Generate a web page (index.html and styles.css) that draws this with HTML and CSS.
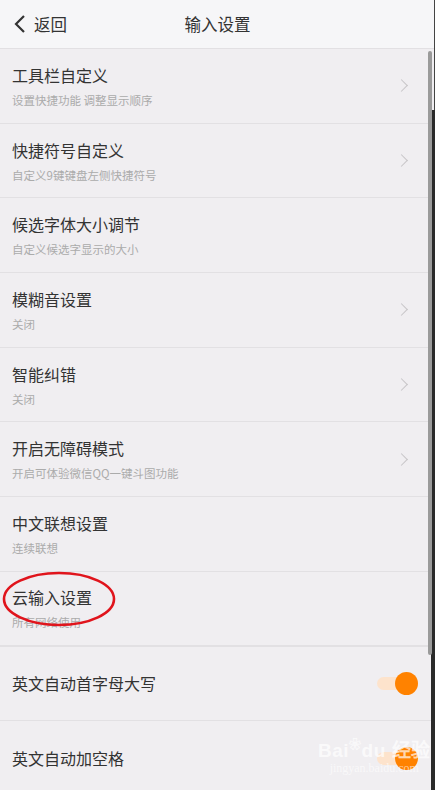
FILE: index.html
```html
<!DOCTYPE html>
<html lang="zh-CN">
<head>
  <meta charset="UTF-8" />
  <meta name="viewport" content="width=device-width, initial-scale=1.0"/>
  <title>输入设置</title>
  <link rel="stylesheet" href="styles.css">
</head>
<body>

  <div class="screen">
    <!-- 顶部栏 -->
    <div class="topbar">
      <div class="back">
        <svg width="14" height="20" viewBox="0 0 14 20"><path d="M11 2 L3 10 L11 18" fill="none" stroke="#333" stroke-width="2.2"/></svg>
        <span>返回</span>
      </div>
      <div class="title">输入设置</div>
    </div>

    <div class="list">
      <div class="item">
        <div class="text"><div class="name">工具栏自定义</div><div class="desc">设置快捷功能 调整显示顺序</div></div>
        <span class="arrow"></span>
      </div>
      <div class="item">
        <div class="text"><div class="name">快捷符号自定义</div><div class="desc">自定义9键键盘左侧快捷符号</div></div>
        <span class="arrow"></span>
      </div>
      <div class="item">
        <div class="text"><div class="name">候选字体大小调节</div><div class="desc">自定义候选字显示的大小</div></div>
      </div>
      <div class="item">
        <div class="text"><div class="name">模糊音设置</div><div class="desc">关闭</div></div>
        <span class="arrow"></span>
      </div>
      <div class="item">
        <div class="text"><div class="name">智能纠错</div><div class="desc">关闭</div></div>
        <span class="arrow"></span>
      </div>
      <div class="item">
        <div class="text"><div class="name">开启无障碍模式</div><div class="desc">开启可体验微信QQ一键斗图功能</div></div>
        <span class="arrow"></span>
      </div>
      <div class="item">
        <div class="text"><div class="name">中文联想设置</div><div class="desc">连续联想</div></div>
      </div>
      <div class="item group-end">
        <div class="text"><div class="name">云输入设置</div><div class="desc">所有网络使用</div></div>
      </div>
      <div class="item">
        <div class="text"><div class="name">英文自动首字母大写</div></div>
        <span class="switch"></span>
      </div>
      <div class="item">
        <div class="text"><div class="name">英文自动加空格</div></div>
        <span class="switch"></span>
      </div>
    </div>

    <!-- 标注圈 -->
    <svg class="mark" width="116" height="58" viewBox="0 0 116 58"><ellipse cx="58" cy="29" rx="55" ry="26" fill="none" stroke="#e0141c" stroke-width="2.6"/></svg>

    <div class="watermark">
      <div class="wm-main">Bai<span class="paw">❀</span>du 经验</div>
      <div class="wm-sub">jingyan.baidu.com</div>
    </div>

    <div class="edge"></div>
    <div class="scroll-thumb"></div>
  </div>

</body>
</html>
```

FILE: styles.css
```css
* {
  box-sizing: border-box;
}

body {
  margin: 0;
  font-family: "Noto Sans CJK SC", "Noto Sans", sans-serif;
  background: #f0eef1;
  color: #333;
}

.screen {
  position: relative;
  width: 435px;
  height: 790px;
  overflow: hidden;
  background: #f0eef1;
}

.topbar {
  height: 49px;
  background: #f6f6f8;
  border-bottom: 1px solid #e2e0e3;
  display: flex;
  align-items: center;
  position: relative;
}

.back {
  display: flex;
  align-items: center;
  gap: 7px;
  padding-left: 13px;
  font-size: 16.5px;
  color: #333;
}

.title {
  position: absolute;
  left: 0;
  right: 0;
  text-align: center;
  font-size: 16.5px;
  color: #333;
  pointer-events: none;
}

.item {
  height: 74.7px;
  display: flex;
  align-items: center;
  padding: 0 16px 0 12px;
  border-bottom: 1px solid #e2e0e3;
}

.item.group-end {
  border-bottom: 2px solid #e2e0e3;
}

.text {
  flex: 1;
}

.name {
  font-size: 16px;
  line-height: 22px;
  color: #333;
}

.desc {
  font-size: 11.5px;
  line-height: 16px;
  margin-top: 6px;
  color: #ababab;
}

.arrow {
  width: 9px;
  height: 9px;
  border-top: 1.3px solid #c6c4c7;
  border-right: 1.3px solid #c6c4c7;
  transform: rotate(45deg);
  margin-right: 13px;
}

.switch {
  position: relative;
  width: 30px;
  height: 13px;
  border-radius: 7px;
  background: #fde3cc;
  margin-right: 12px;
}

.switch::after {
  content: "";
  position: absolute;
  right: -11px;
  top: -5px;
  width: 23px;
  height: 23px;
  border-radius: 50%;
  background: #ff8200;
}

.mark {
  position: absolute;
  left: 1px;
  top: 570px;
}

.watermark {
  position: absolute;
  left: 318px;
  top: 735px;
  color: rgba(255, 255, 255, 0.7);
  font-family: "Liberation Sans", sans-serif;
  text-align: center;
}

.wm-main {
  font-size: 19px;
  font-weight: bold;
  letter-spacing: 0.5px;
}

.paw {
  font-size: 12px;
  vertical-align: 8px;
}

.wm-sub {
  font-family: "Liberation Serif", serif;
  font-size: 12px;
  color: rgba(255, 255, 255, 0.6);
  margin-top: -1px;
}

.edge {
  position: absolute;
  right: 0;
  top: 110px;
  width: 4px;
  bottom: 0;
  background: #2a2a2a;
}

.edge::before {
  content: "";
  position: absolute;
  right: 0;
  top: -110px;
  width: 1px;
  height: 110px;
  background: #444;
}

.scroll-thumb {
  position: absolute;
  right: 3px;
  top: 51px;
  width: 4px;
  height: 604px;
  border-radius: 2px;
  background: #9a9a9a;
}
```
